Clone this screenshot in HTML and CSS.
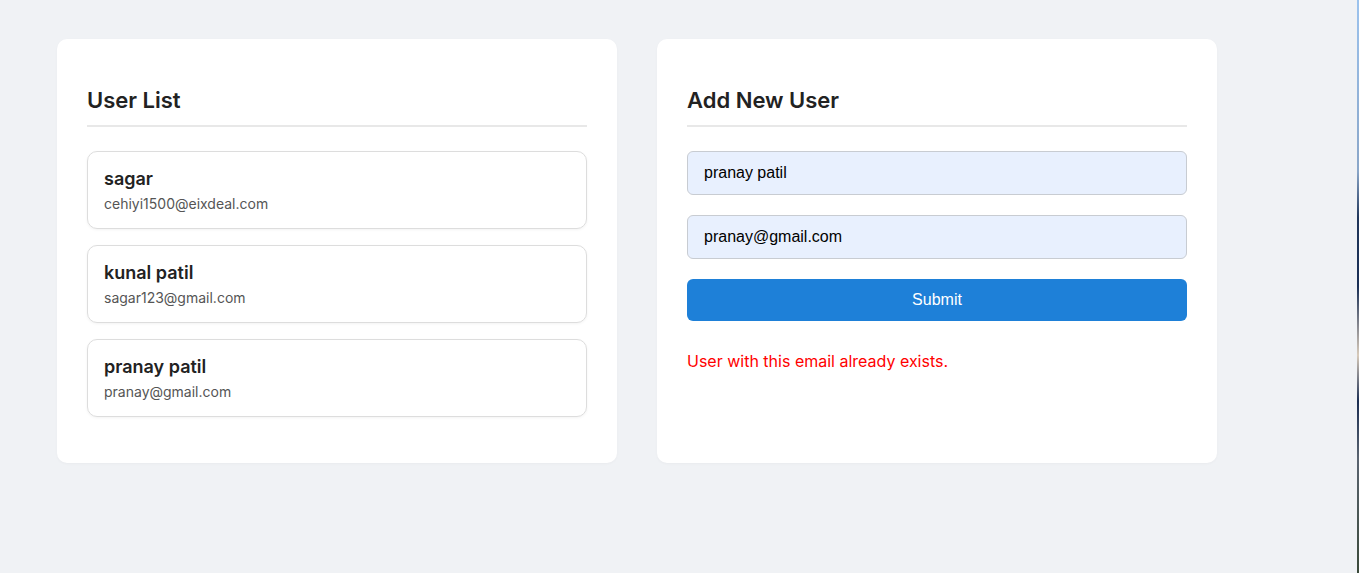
FILE: index.html
```html
<!DOCTYPE html>
<html>
<head>
<meta charset="utf-8">
<link rel="stylesheet" href="styles.css">
</head>
<body>
<div class="page">
  <section class="card">
    <h2 class="card-title">User List</h2>
    <ul class="user-list">
      <li class="user-item">
        <div class="user-name">sagar</div>
        <div class="user-email">cehiyi1500@eixdeal.com</div>
      </li>
      <li class="user-item">
        <div class="user-name">kunal patil</div>
        <div class="user-email">sagar123@gmail.com</div>
      </li>
      <li class="user-item">
        <div class="user-name">pranay patil</div>
        <div class="user-email">pranay@gmail.com</div>
      </li>
    </ul>
  </section>
  <section class="card">
    <h2 class="card-title">Add New User</h2>
    <form class="user-form">
      <input class="field" type="text" value="pranay patil">
      <input class="field" type="email" value="pranay@gmail.com">
      <button class="submit" type="button">Submit</button>
    </form>
    <p class="error">User with this email already exists.</p>
  </section>
</div>
<div class="edge-strip"></div>
</body>
</html>
```
FILE: styles.css
```css
* { box-sizing: border-box; }
html, body { height: 100%; }
body {
  margin: 0;
  background: #f0f2f5;
  font-family: Inter, "Noto Sans", sans-serif;
  color: #222;
}
.page {
  display: flex;
  align-items: stretch;
  gap: 40px;
  padding: 39px 0 0 57px;
}
.card {
  width: 560px;
  height: 424px;
  background: #fff;
  border-radius: 10px;
  padding: 30px;
  box-shadow: 0 1px 3px rgba(0,0,0,0.03);
}
.card-title {
  margin: 18px 0 24px;
  font-size: 22px;
  font-weight: 600;
  line-height: 27px;
  color: #222;
  padding-bottom: 11px;
  border-bottom: 2px solid #e8e8e8;
}
.user-list {
  list-style: none;
  margin: 0;
  padding: 0;
  display: flex;
  flex-direction: column;
  gap: 16px;
}
.user-item {
  height: 78px;
  border: 1px solid #ddd;
  border-radius: 10px;
  padding: 15px 16px;
  box-shadow: 0 1px 3px rgba(0,0,0,0.05);
}
.user-name {
  font-size: 18px;
  font-weight: 600;
  line-height: 24px;
  color: #222;
}
.user-email {
  margin-top: 4px;
  font-size: 14px;
  line-height: 18px;
  color: #555;
}
.user-form {
  display: flex;
  flex-direction: column;
  gap: 20px;
}
.field {
  height: 44px;
  width: 100%;
  border: 1px solid #c8ccd2;
  border-radius: 6px;
  background: #e8f0fe;
  padding: 0 16px;
  font-family: "Liberation Sans", Arial, sans-serif;
  font-size: 16px;
  color: #000;
  outline: none;
}
.submit {
  height: 42px;
  width: 100%;
  border: none;
  border-radius: 6px;
  background: #1e80d8;
  color: #fff;
  font-family: "Liberation Sans", Arial, sans-serif;
  font-size: 16px;
}
.error {
  margin: 30px 0 0;
  font-size: 16px;
  line-height: 20px;
  color: #ff0000;
}
.edge-strip {
  position: fixed;
  top: 0;
  right: 0;
  width: 2px;
  height: 100%;
  background: linear-gradient(#9cc3ee 0%, #8aa6c8 30%, #20365a 38%, #1a2f55 50%, #d8cbbb 62%, #1b2e52 70%, #5a6470 80%, #3b4a3a 100%);
}
```
